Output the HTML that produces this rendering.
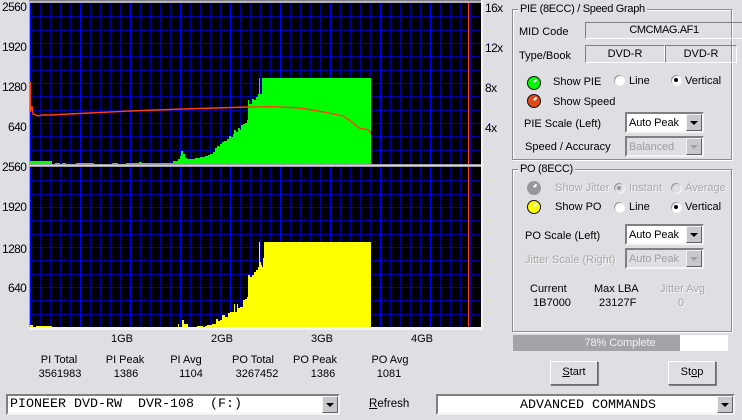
<!DOCTYPE html>
<html><head><meta charset="utf-8">
<style>
html,body{margin:0;padding:0}
body{width:742px;height:420px;overflow:hidden;background:#dfdfe3;position:relative;font-family:"Liberation Sans",Arial,sans-serif;font-size:11px;color:#000}
.t{position:absolute;white-space:nowrap;line-height:13px;height:13px;margin-top:1px}
.c{transform:translateX(-50%)}
.d{color:#a8a8ac;text-shadow:1px 1px 0 #f4f4f4}
.ax{font-size:12px;line-height:14px;height:14px;letter-spacing:-.6px;margin-top:0}
.ti{margin-top:0;letter-spacing:-.3px;background:#dfdfe3;padding:0 2px}
.g{position:absolute;left:512px;width:218px;border:1px solid #8c8c90;box-shadow:1px 1px 0 #fff,inset 1px 1px 0 #fff}
.f{position:absolute;box-sizing:border-box;border:1px solid;border-color:#808080 #fff #fff #808080;text-align:center;line-height:15px}
.combo{position:absolute;box-sizing:border-box;background:#fff;border:2px solid;border-color:#808084 #f4f4f4 #f4f4f4 #808084;width:79px;height:21px;line-height:18px;padding-left:2px;font-size:11px;letter-spacing:-.1px}
.combo.dis{background:#dfdfe3;color:#a0a0a4}
.arr{position:absolute;right:0;top:0;width:16px;height:17px;background:#c8c8cc;box-sizing:border-box;border:1px solid;border-color:#f4f4f4 #606064 #606064 #f4f4f4}
.arr:after{content:"";position:absolute;left:3px;top:6px;border:4px solid transparent;border-top:4px solid #000;border-bottom:0}
.dis .arr:after{border-top-color:#a0a0a4}
.led{position:absolute;width:12px;height:12px;border-radius:50%;border:1.5px solid #101010}
.led i{position:absolute;left:5px;top:3px;width:4px;height:1.5px;background:#fff;transform:rotate(-45deg)}
.rad{position:absolute;width:10px;height:10px;border-radius:50%;background:#fff;box-shadow:inset 1px 1px 0 #98989c,1px 1px 0 #f6f6f6}
.rad b{position:absolute;left:3px;top:3px;width:4px;height:4px;border-radius:50%;background:#000}
.btn{position:absolute;box-sizing:border-box;width:48px;height:24px;background:#dfdfe3;border:1px solid;border-color:#fff #6c6c70 #6c6c70 #fff;box-shadow:1px 1px 0 #808084;text-align:center;line-height:21px;font-size:11px}
.mono{font-family:"Liberation Mono","Courier New",monospace;font-size:13.33px;white-space:pre;letter-spacing:0}
</style></head><body>

<svg width="742" height="420" style="position:absolute;left:0;top:0" shape-rendering="crispEdges">
<rect x="29" y="0" width="453" height="330" fill="#a0a0a4"/>
<rect x="30" y="3" width="451" height="324" fill="#000"/>
<g stroke="#0000a0" stroke-width="1" fill="none">
<path d="M40.5 3V327M50.5 3V327M60.5 3V327M70.5 3V327M90.5 3V327M100.5 3V327M110.5 3V327M120.5 3V327M140.5 3V327M150.5 3V327M160.5 3V327M170.5 3V327M190.5 3V327M200.5 3V327M210.5 3V327M220.5 3V327M240.5 3V327M250.5 3V327M260.5 3V327M270.5 3V327M290.5 3V327M300.5 3V327M310.5 3V327M320.5 3V327M340.5 3V327M350.5 3V327M360.5 3V327M370.5 3V327M390.5 3V327M400.5 3V327M410.5 3V327M420.5 3V327M440.5 3V327M450.5 3V327M460.5 3V327M470.5 3V327"/>
<path d="M30 16.5H481M30 30.5H481M30 43.5H481M30 56.5H481M30 70.5H481M30 83.5H481M30 96.5H481M30 110.5H481M30 123.5H481M30 136.5H481M30 150.5H481"/>
<path d="M30 180.5H481M30 194.5H481M30 207.5H481M30 220.5H481M30 234.5H481M30 247.5H481M30 260.5H481M30 274.5H481M30 287.5H481M30 300.5H481M30 314.5H481"/>
</g>
<path stroke="#0000ff" fill="none" d="M30.5 3V327M80.5 3V327M130.5 3V327M180.5 3V327M230.5 3V327M280.5 3V327M330.5 3V327M380.5 3V327M430.5 3V327"/>
<path stroke="#ff4010" fill="none" d="M468.5 3V327"/>

<!-- PIE bars -->
<path fill="#00ff00" d="M30 161H52V164H30ZM55 163H60V164H55ZM62 163H66V164H62ZM76 163H94V164H76ZM112 163H118V164H112ZM126 163H160V164H126ZM139 162H142V164H139ZM158 163H175V164H158Z"/>
<path fill="#00ff00" d="M173 164V161H178V159H180V156H181V151H183V154H185V158H187V159H195V158H200V157H205V156H208V155H210V154H213V152H215V148H217V146H219V147H220V144H222V142H224V141H227V139H229V136H231V137H233V134H234V130H236V132H238V128H240V130H241V125H243V124H245V123H247V120H248V100H249V104H252V99H254V100H256V97H258V94H259V78H260V94H262V78H371V164Z"/>
<!-- speed -->
<path fill="none" stroke="#ff4010" stroke-width="1.4" shape-rendering="geometricPrecision" d="M30.5 82V112L32 106L33 114L36 115L38 116L42 115L50 115L60 114.5L80 113.5L130 111L183 109L248 107L273 106.7L300 108L327 112.7L343 116L350 120.7L360 128.5L368 129.5L371 134"/>

<!-- PO bars -->
<path fill="#ffff00" d="M30 325H33V327H30ZM36 326H52V327H36ZM178 324H179V327H178ZM182 320H184V327H182ZM184 324H188V327H184ZM197 326H203V327H197ZM205 326H209V327H205Z"/>
<path fill="#ffff00" d="M205 327V326H207V325H212V324H216V319H218V321H220V320H222V315H225V317H228V313H230V312H234V304H235V312H237V304H238V308H240V307H243V300H245V299H247V297H248V275H250V277H252V275H254V272H256V270H258V267H259V242H260V262H261V265H262V267H263V258H264V242H371V327Z"/>

<!-- separator -->
<rect x="29" y="164" width="453" height="3" fill="#a0a0a4"/>
<rect x="29" y="165" width="453" height="1" fill="#d4d4d8"/>
<rect x="29" y="0" width="453" height="1" fill="#808084"/>
<rect x="29" y="1" width="453" height="2" fill="#b4b4b8"/>
<rect x="29" y="327" width="453" height="3" fill="#f4f4f6"/>
<rect x="481" y="0" width="2" height="330" fill="#f4f4f6"/>
</svg>

<!-- axes -->
<span class="t ax" style="left:2px;top:0">2560</span>
<span class="t ax" style="left:2px;top:40px">1920</span>
<span class="t ax" style="left:2px;top:80px">1280</span>
<span class="t ax" style="left:8px;top:120px">640</span>
<span class="t ax" style="left:2px;top:160px">2560</span>
<span class="t ax" style="left:2px;top:200px">1920</span>
<span class="t ax" style="left:2px;top:242px">1280</span>
<span class="t ax" style="left:8px;top:281px">640</span>
<span class="t ax" style="left:485px;top:1px">16x</span>
<span class="t ax" style="left:485px;top:41px">12x</span>
<span class="t ax" style="left:485px;top:81px">8x</span>
<span class="t ax" style="left:485px;top:121px">4x</span>

<span class="t c" style="left:122px;top:332px">1GB</span>
<span class="t c" style="left:222px;top:332px">2GB</span>
<span class="t c" style="left:322px;top:332px">3GB</span>
<span class="t c" style="left:422px;top:332px">4GB</span>

<span class="t c" style="left:59px;top:353px">PI Total</span>
<span class="t c" style="left:125px;top:353px">PI Peak</span>
<span class="t c" style="left:186px;top:353px">PI Avg</span>
<span class="t c" style="left:253px;top:353px">PO Total</span>
<span class="t c" style="left:315px;top:353px">PO Peak</span>
<span class="t c" style="left:390px;top:353px">PO Avg</span>
<span class="t c" style="left:60px;top:367px">3561983</span>
<span class="t c" style="left:126px;top:367px">1386</span>
<span class="t c" style="left:191px;top:367px">1104</span>
<span class="t c" style="left:257px;top:367px">3267452</span>
<span class="t c" style="left:323px;top:367px">1386</span>
<span class="t c" style="left:389px;top:367px">1081</span>

<!-- PIE group -->
<div class="g" style="top:9px;height:149px"></div>
<span class="t ti" style="left:518px;top:3px">PIE (8ECC) / Speed Graph</span>
<span class="t" style="left:519px;top:25px">MID Code</span>
<div class="f" style="left:585px;top:22px;width:157px;height:17px;border-right:0;letter-spacing:-.4px">CMCMAG.AF1</div>
<span class="t" style="left:519px;top:49px">Type/Book</span>
<div class="f" style="left:585px;top:45px;width:80px;height:18px;line-height:17px">DVD-R</div>
<div class="f" style="left:665px;top:45px;width:72px;height:18px;line-height:17px">DVD-R</div>

<div class="led" style="left:527px;top:76px;background:#00ff00"><i></i></div>
<span class="t" style="left:553px;top:75px">Show PIE</span>
<div class="rad" style="left:614px;top:75px"></div>
<span class="t" style="left:629px;top:74px">Line</span>
<div class="rad" style="left:671px;top:75px"><b></b></div>
<span class="t" style="left:685px;top:74px">Vertical</span>
<div class="led" style="left:527px;top:94px;background:#e04818"><i></i></div>
<span class="t" style="left:553px;top:95px">Show Speed</span>

<span class="t" style="left:524px;top:117px">PIE Scale (Left)</span>
<div class="combo" style="left:625px;top:112px">Auto Peak<div class="arr"></div></div>
<span class="t" style="left:525px;top:140px">Speed / Accuracy</span>
<div class="combo dis" style="left:625px;top:136px">Balanced<div class="arr"></div></div>

<!-- PO group -->
<div class="g" style="top:169px;height:161px"></div>
<span class="t ti" style="left:518px;top:163px">PO (8ECC)</span>
<div class="led" style="left:527px;top:181px;background:#98989c;border-color:#98989c"><i></i></div>
<span class="t d" style="left:555px;top:181px">Show Jitter</span>
<div class="rad" style="left:614px;top:183px;background:#dfdfe3"><b style="background:#98989c"></b></div>
<span class="t d" style="left:629px;top:181px">Instant</span>
<div class="rad" style="left:671px;top:183px;background:#dfdfe3"></div>
<span class="t d" style="left:685px;top:181px">Average</span>
<div class="led" style="left:527px;top:200px;background:#ffff00"><i></i></div>
<span class="t" style="left:555px;top:200px">Show PO</span>
<div class="rad" style="left:614px;top:202px"></div>
<span class="t" style="left:629px;top:200px">Line</span>
<div class="rad" style="left:671px;top:202px"><b></b></div>
<span class="t" style="left:685px;top:200px">Vertical</span>

<span class="t" style="left:525px;top:229px">PO Scale (Left)</span>
<div class="combo" style="left:625px;top:224px">Auto Peak<div class="arr"></div></div>
<span class="t d" style="left:525px;top:253px">Jitter Scale (Right)</span>
<div class="combo dis" style="left:625px;top:248px">Auto Peak<div class="arr"></div></div>

<span class="t" style="left:530px;top:282px">Current</span>
<span class="t" style="left:594px;top:282px">Max LBA</span>
<span class="t d" style="left:660px;top:282px">Jitter Avg</span>
<span class="t" style="left:533px;top:296px">1B7000</span>
<span class="t" style="left:599px;top:296px">23127F</span>
<span class="t d" style="left:678px;top:296px">0</span>

<!-- progress -->
<div style="position:absolute;left:513px;top:335px;width:215px;height:16px;background:#fff"></div>
<div style="position:absolute;left:513px;top:335px;width:167px;height:16px;background:#a4a4a8"></div>
<span class="t c" style="left:620px;top:336px;color:#f0f0f0;letter-spacing:-.1px">78% Complete</span>

<div class="btn" style="left:550px;top:361px"><u>S</u>tart</div>
<div class="btn" style="left:668px;top:361px">St<u>o</u>p</div>

<!-- bottom -->
<div class="combo mono" style="left:6px;top:394px;width:334px;height:21px;padding-left:2px;line-height:18px">PIONEER DVD-RW  DVR-108  (F:)<div class="arr"></div></div>
<span class="t" style="left:369px;top:397px;font-size:11.5px"><u>R</u>efresh</span>
<div class="combo mono" style="left:436px;top:394px;width:299px;height:21px;padding-left:82px;line-height:19px">ADVANCED COMMANDS<div class="arr"></div></div>
</body></html>
